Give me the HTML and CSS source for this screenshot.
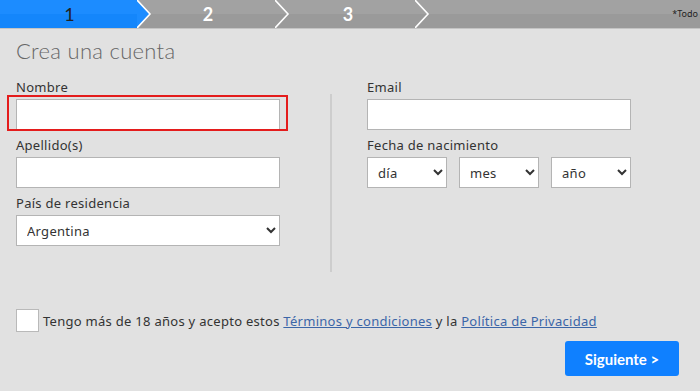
FILE: index.html
```html
<!DOCTYPE html>
<html lang="es">
<head>
    <meta charset="UTF-8">
    <meta name="viewport" content="width=device-width, initial-scale=1.0">
    <title>Crea una cuenta</title>
    <link rel="stylesheet" href="styles.css">
</head>
<body>
    <!-- Progress steps -->
    <div class="steps">
        <div class="step active">
            <span class="num">1</span>
            <svg class="chevron" width="16" height="28" viewBox="0 0 16 28">
                <polygon points="0,0 13,14 0,28" fill="#1c8cff"/>
                <polyline points="0,0 13,14 0,28" fill="none" stroke="#fff" stroke-width="1.6"/>
            </svg>
        </div>
        <div class="step">
            <span class="num">2</span>
            <svg class="chevron" width="16" height="28" viewBox="0 0 16 28">
                <polyline points="0,0 13,14 0,28" fill="none" stroke="#fff" stroke-width="1.6"/>
            </svg>
        </div>
        <div class="step">
            <span class="num">3</span>
            <svg class="chevron" width="16" height="28" viewBox="0 0 16 28">
                <polyline points="0,0 13,14 0,28" fill="none" stroke="#fff" stroke-width="1.6"/>
            </svg>
        </div>
        <div class="required-note">*Todo</div>
    </div>

    <div class="form">
        <h1>Crea una cuenta</h1>

        <div class="columns">
            <!-- Left column -->
            <div class="col">
                <label class="field">
                    <span class="label">Nombre</span>
                    <span class="highlight"><input type="text"></span>
                </label>
                <label class="field">
                    <span class="label">Apellido(s)</span>
                    <input type="text">
                </label>
                <label class="field">
                    <span class="label">País de residencia</span>
                    <select>
                        <option>Argentina</option>
                    </select>
                </label>
            </div>

            <div class="divider"></div>

            <!-- Right column -->
            <div class="col">
                <label class="field">
                    <span class="label">Email</span>
                    <input type="email">
                </label>
                <div class="field">
                    <span class="label">Fecha de nacimiento</span>
                    <div class="date-row">
                        <select><option>día</option></select>
                        <select><option>mes</option></select>
                        <select><option>año</option></select>
                    </div>
                </div>
            </div>
        </div>

        <div class="terms">
            <span class="check"></span>
            <span>Tengo más de 18 años y acepto estos <a href="#">Términos y condiciones</a> y la <a href="#">Política de Privacidad</a></span>
        </div>

        <div class="actions">
            <button class="next">Siguiente &gt;</button>
        </div>
    </div>
</body>
</html>
```

FILE: styles.css
```css
/* General */
body {
    margin: 0;
    padding: 0;
    font-family: 'Noto Sans', 'Lato', sans-serif;
    letter-spacing: 0.28px;
    background: #e1e1e1;
    color: #333;
    overflow: hidden;
}

/* Progress steps */
.steps {
    display: flex;
    height: 28px;
    background: linear-gradient(#a2a2a2 50%, #9a9a9a 50%);
    border-bottom: 1px solid #c4c4c4;
    position: relative;
    overflow: hidden;
}

.step {
    position: relative;
    width: 140px;
    text-align: center;
    line-height: 28px;
    font-family: 'Lato', sans-serif;
    font-size: 18px;
    font-weight: bold;
    letter-spacing: 0;
    color: #fff;
}

.step.active {
    width: 137px;
    background: linear-gradient(#1c8cff 50%, #1486fb 50%);
    color: #222;
    font-weight: normal;
}

.step .num {
    display: inline-block;
    padding-left: 2px;
}

.chevron {
    position: absolute;
    top: 0;
    right: -14px;
    z-index: 1;
}

.step.active .chevron {
    right: -16px;
}

.required-note {
    position: absolute;
    right: 2px;
    top: 7px;
    font-size: 9px;
    letter-spacing: 0;
    color: #222;
    white-space: nowrap;
}

/* Form */
.form {
    padding: 0 21px 0 16px;
}

h1 {
    margin: 9px 0 0;
    font-family: 'Lato', sans-serif;
    font-size: 22px;
    font-weight: 300;
    color: #666;
    line-height: 26px;
    letter-spacing: 0.3px;
}

.columns {
    display: flex;
    margin-top: 15px;
}

.col {
    width: 264px;
}

.divider {
    width: 2px;
    height: 178px;
    margin: 15px 35px 0 50px;
    background: #cdcdcd;
}

.field {
    display: block;
    margin-bottom: 7px;
}

.label {
    display: block;
    font-size: 13px;
    line-height: 16px;
    margin-bottom: 4px;
    color: #333;
}

input,
select {
    box-sizing: border-box;
    display: block;
    width: 264px;
    height: 31px;
    border: 1px solid #b4b4b4;
    background: #fff;
    font-family: inherit;
    font-size: 13px;
    letter-spacing: 0.28px;
    color: #333;
    margin: 0;
}

select {
    padding-left: 6px;
}

.highlight {
    display: block;
    position: relative;
}

.highlight::after {
    content: "";
    position: absolute;
    left: -9px;
    right: -8px;
    top: -4px;
    bottom: -1px;
    border: 2px solid #e41c1c;
    pointer-events: none;
}

.date-row {
    display: flex;
    gap: 12px;
}

.date-row select {
    width: 80px;
}

/* Terms */
.terms {
    display: flex;
    align-items: center;
    gap: 4px;
    margin-top: 37px;
    font-size: 13px;
    line-height: 16px;
    color: #333;
}

.check {
    box-sizing: border-box;
    width: 23px;
    height: 23px;
    background: #fff;
    border: 1px solid #b9b9b9;
}

.terms a {
    color: #3b66a8;
}

.actions {
    display: flex;
    justify-content: flex-end;
    margin-top: 9px;
}

.next {
    width: 114px;
    height: 35px;
    border: none;
    border-radius: 3px;
    background: #0f80ff;
    color: #fff;
    font-family: 'Lato', sans-serif;
    font-size: 15px;
    font-weight: bold;
    letter-spacing: 0;
}
```
